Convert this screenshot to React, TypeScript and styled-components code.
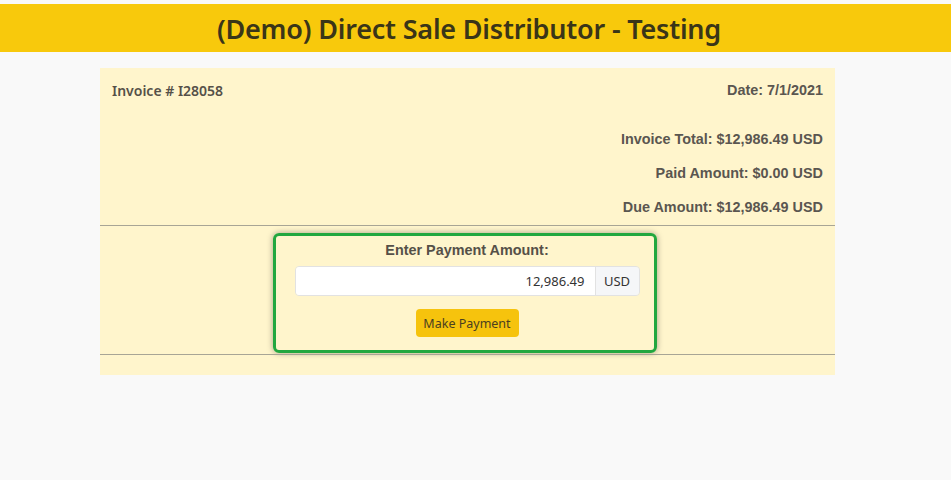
import React from "react";
import styled, { createGlobalStyle } from "styled-components";

const GlobalStyle = createGlobalStyle`
  body {
    margin: 0;
    background: #f9f9f9;
    font-family: "Noto Sans", "Open Sans", sans-serif;
  }
`;

export default function App() {
  return (
    <>
      <GlobalStyle />
      <Page>
        <Header>
          <Title>(Demo) Direct Sale Distributor - Testing</Title>
        </Header>
        <Card>
          <TopRow>
            <InvoiceNo>Invoice # I28058</InvoiceNo>
            <Amount>Date: 7/1/2021</Amount>
          </TopRow>
          <Totals>
            <Amount>Invoice Total: $12,986.49 USD</Amount>
            <Amount>Paid Amount: $0.00 USD</Amount>
            <Amount>Due Amount: $12,986.49 USD</Amount>
          </Totals>
          <Rule />
          <PayBox>
            <Label>Enter Payment Amount:</Label>
            <InputGroup>
              <AmountInput defaultValue="12,986.49" />
              <Addon>USD</Addon>
            </InputGroup>
            <PayButton>Make Payment</PayButton>
          </PayBox>
          <Rule $gap={1} />
        </Card>
      </Page>
    </>
  );
}

const Page = styled.div`
  padding-top: 4px;
`;

const Header = styled.div`
  background: #f8c90c;
  height: 48px;
  display: flex;
  align-items: center;
  justify-content: center;
  padding-right: 13px;
`;

const Title = styled.h1`
  margin: 0;
  font-family: "Noto Sans", sans-serif;
  font-weight: 600;
  font-size: 27px;
  color: #3a3518;
  letter-spacing: -0.2px;
`;

const Card = styled.div`
  width: 735px;
  margin: 16px 0 0 100px;
  background: #fff5cc;
  padding-bottom: 20px;
`;

const TopRow = styled.div`
  display: flex;
  justify-content: space-between;
  align-items: center;
  padding: 12px 12px 0;
  height: 20px;
`;

const InvoiceNo = styled.div`
  font-family: "Noto Sans", sans-serif;
  font-weight: 600;
  font-size: 14px;
  color: #555048;
`;

const Amount = styled.div`
  font-family: "Liberation Sans", Arial, sans-serif;
  font-weight: 700;
  font-size: 14.4px;
  color: #5a5650;
  text-align: right;
`;

const Totals = styled.div`
  display: flex;
  flex-direction: column;
  gap: 18px;
  padding: 31px 12px 0;
  line-height: 16px;
`;

const Rule = styled.hr<{ $gap?: number }>`
  margin: ${(p) => p.$gap ?? 10}px 0 0;
  border: 0;
  border-top: 1px solid #a8a595;
`;

const PayBox = styled.div`
  width: 378px;
  margin: 7px 0 0 173px;
  border: 3px solid #22a73f;
  border-radius: 6px;
  box-shadow: 0 0 6px rgba(0, 0, 0, 0.35);
  display: flex;
  flex-direction: column;
  align-items: center;
  padding: 6px 0 13px;
`;

const Label = styled.div`
  font-family: "Liberation Sans", Arial, sans-serif;
  font-weight: 700;
  font-size: 14.4px;
  color: #555048;
  line-height: 16px;
  margin-left: 4px;
`;

const InputGroup = styled.div`
  display: flex;
  width: 345px;
  height: 30px;
  margin: 8px 0 0 4px;
  border: 1px solid #e2e2e2;
  border-radius: 4px;
  overflow: hidden;
  box-sizing: border-box;
`;

const AmountInput = styled.input`
  flex: 1;
  border: 0;
  outline: none;
  text-align: right;
  padding: 0 10px;
  font-family: "Noto Sans", sans-serif;
  font-size: 13px;
  color: #333;
  background: #fff;
  min-width: 0;
`;

const Addon = styled.div`
  width: 43px;
  display: flex;
  align-items: center;
  justify-content: center;
  background: #f5f6f8;
  border-left: 1px solid #e2e2e2;
  font-family: "Noto Sans", sans-serif;
  font-size: 13px;
  color: #333;
`;

const PayButton = styled.button`
  margin: 13px 0 0 4px;
  width: 103px;
  height: 28px;
  border: 0;
  border-radius: 4px;
  background: #f6c30d;
  color: #4a4020;
  font-family: "Noto Sans", sans-serif;
  font-size: 12.5px;
  cursor: pointer;
`;
